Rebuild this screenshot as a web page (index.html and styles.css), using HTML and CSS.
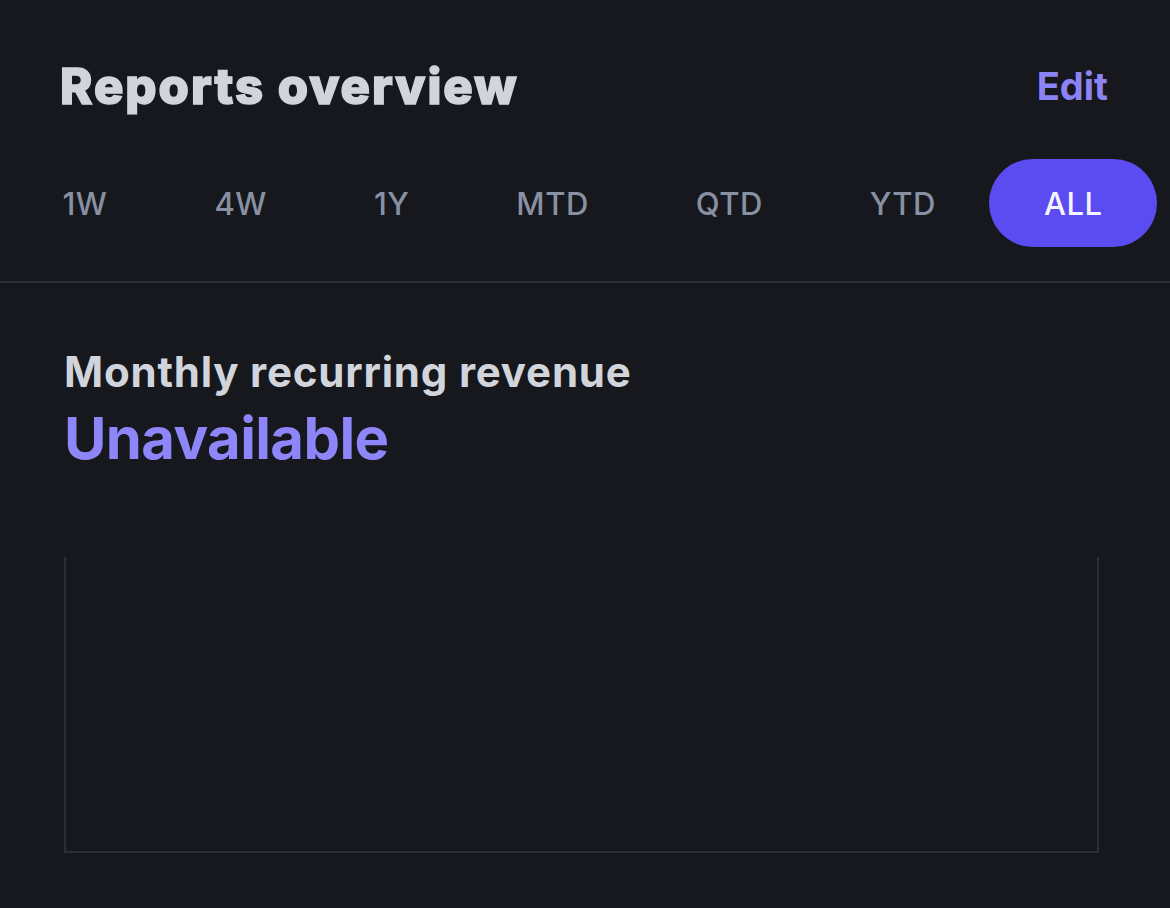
FILE: index.html
```html
<!DOCTYPE html>
<html lang="en">

<head>
    <meta charset="utf-8">
    <meta name="viewport" content="width=device-width, initial-scale=1.0">
    <title>Reports overview</title>
    <link rel="stylesheet" href="styles.css">
</head>

<body>
    <header class="top">
        <h1>Reports overview</h1>
        <a class="edit" href="#">Edit</a>
    </header>

    <nav class="perioder">
        <button class="periode">1W</button>
        <button class="periode">4W</button>
        <button class="periode">1Y</button>
        <button class="periode">MTD</button>
        <button class="periode">QTD</button>
        <button class="periode">YTD</button>
        <button class="periode valgt">ALL</button>
    </nav>

    <section class="rapport">
        <h2>Monthly recurring revenue</h2>
        <p class="vaerdi">Unavailable</p>
        <div class="graf"></div>
    </section>
</body>

</html>
```

FILE: styles.css
```css
body {
    margin: 0;
    background: #17181d;
    font-family: Inter, "Noto Sans", sans-serif;
    color: #d1d5db;
    width: 1170px;
    height: 908px;
    overflow: hidden;
}

.top {
    display: flex;
    justify-content: space-between;
    align-items: center;
    padding: 54px 62px 0 60px;
    height: 64px;
}

h1 {
    margin: 0;
    font-size: 49px;
    font-weight: 800;
    letter-spacing: 2px;
    -webkit-text-stroke: 1.6px #d1d5db;
    color: #d1d5db;
}

.edit {
    font-size: 38px;
    font-weight: 700;
    color: #8b83f6;
    text-decoration: none;
}

.perioder {
    display: flex;
    align-items: center;
    padding: 41px 0 34px 9px;
    border-bottom: 2px solid #2c2e35;
    white-space: nowrap;
}

.periode {
    background: none;
    border: none;
    font-family: inherit;
    font-size: 31px;
    font-weight: 500;
    color: #8891a3;
    padding: 0 53.5px;
    height: 88px;
    border-radius: 44px;
    letter-spacing: 0.5px;
}

.periode.valgt {
    background: #5b4cf2;
    color: #f4f3ff;
    padding: 0 54.5px;
}

.rapport {
    padding: 64px 71px 0 64px;
}

h2 {
    margin: 0;
    font-size: 42px;
    line-height: 50px;
    font-weight: 700;
    letter-spacing: 0.8px;
    color: #d1d5db;
}

.vaerdi {
    margin: 6px 0 0;
    font-size: 58px;
    line-height: 70px;
    font-weight: 700;
    letter-spacing: -0.6px;
    color: #8e86f8;
}

.graf {
    margin-top: 84px;
    height: 294px;
    border-left: 2px solid #2c2e35;
    border-right: 2px solid #2c2e35;
    border-bottom: 2px solid #2c2e35;
}
```
